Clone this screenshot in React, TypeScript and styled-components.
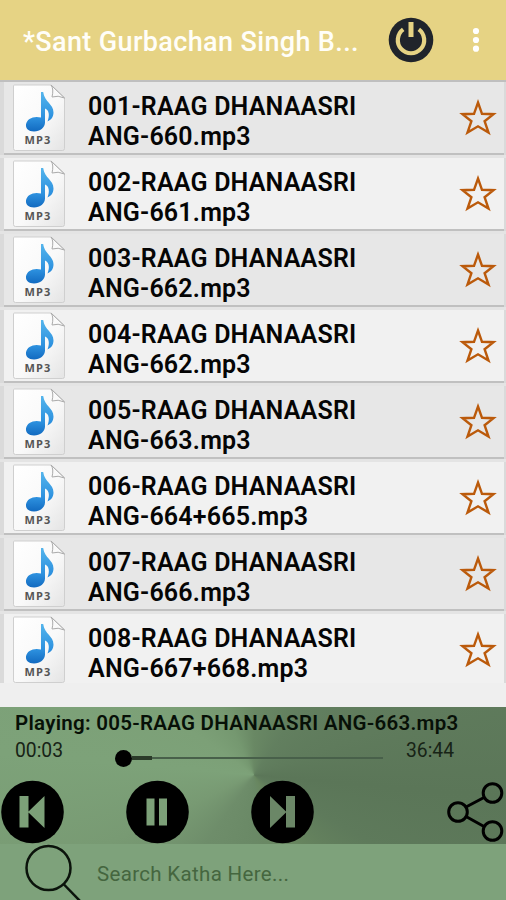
import React from "react";
import styled, { createGlobalStyle } from "styled-components";

const GlobalStyle = createGlobalStyle`
  * { box-sizing: border-box; }
  body { margin: 0; background: #efefef; font-family: Roboto, "Liberation Sans", sans-serif; }
`;

const Screen = styled.main`
  width: 506px;
  height: 900px;
  display: flex;
  flex-direction: column;
  overflow: hidden;
  background: #efefef;
`;

const Header = styled.header`
  flex: 0 0 80px;
  display: flex;
  align-items: center;
  padding-left: 23px;
  background: #e6d384;
`;

const Title = styled.h1`
  margin: 3px 0 0;
  width: 365px;
  color: #fffef8;
  font-size: 27px;
  font-weight: 500;
  line-height: 36px;
  letter-spacing: 0.36px;
  white-space: nowrap;
`;

const IconButton = styled.button<{ $width: number; $height: number }>`
  display: block;
  width: ${(p) => p.$width}px;
  height: ${(p) => p.$height}px;
  padding: 0;
  border: 0;
  background: none;
  flex-shrink: 0;

  svg { display: block; }
`;

const MenuButton = styled(IconButton)`
  margin-left: 30px;
`;

const List = styled.ul`
  flex: 0 0 603px;
  margin: 0;
  padding: 0;
  list-style: none;
  overflow: hidden;
  background: #dcdcdc;
  border-top: 2px solid #bfbfbf;
`;

const Row = styled.li`
  height: 76px;
  padding: 0 2px 0 4px;
  border-bottom: 3px solid #e4e4e4;
  background: #dadada;
`;

const RowCard = styled.div<{ $shaded: boolean }>`
  height: 73px;
  display: flex;
  align-items: flex-start;
  padding: 1px 7px 0 5px;
  border-bottom: 2px solid #c0c0c0;
  background: ${(p) => (p.$shaded ? "#e7e7e7" : "#f1f1f1")};
`;

const TrackName = styled.span`
  width: 314px;
  margin: 9px 0 0 21px;
  color: #050505;
  font-size: 25px;
  font-weight: 600;
  line-height: 30px;
  letter-spacing: 0.2px;
  white-space: pre-line;
`;

const StarButton = styled(IconButton)`
  margin: 15px 0 0 auto;
`;

const Player = styled.section`
  flex: 0 0 137px;
  margin-top: 24px;
  background:
    conic-gradient(from 0deg at 254px 68px,
      #698864 0deg, #627f5f 35deg, #5f7b5c 70deg, #5b7658 95deg, #5e7a5b 120deg, #68865f 150deg,
      #6a8966 180deg, #6e8d6a 215deg, #789a73 245deg, #7da279 275deg,
      #7ca077 305deg, #759870 335deg, #698864 360deg);
`;

const NowPlaying = styled.div`
  height: 30px;
  padding: 1px 0 0 15px;
  color: #071007;
  font-size: 20.5px;
  font-weight: 600;
  line-height: 30px;
  letter-spacing: 0.28px;
  white-space: nowrap;
`;

const Progress = styled.div`
  height: 43px;
  display: flex;
  align-items: flex-start;
  padding-left: 15px;
  color: #172316;
  font-size: 19.3px;
  line-height: 28px;
`;

const Elapsed = styled.time`
  width: 100px;
`;

const Seek = styled.div`
  width: 268px;
  height: 43px;
  display: flex;
  align-items: center;
  padding-bottom: 1px;
`;

const Thumb = styled.span`
  width: 17px;
  height: 17px;
  border-radius: 50%;
  background: #000;
`;

const Played = styled.span`
  width: 20px;
  height: 4px;
  background: #2b3b29;
`;

const Remaining = styled.span`
  width: 231px;
  height: 2px;
  background: #48604a;
`;

const Duration = styled.time`
  margin-left: 23px;
`;

const Controls = styled.div`
  height: 64px;
  display: flex;
  align-items: center;
  padding-left: 1px;
  gap: 62px;
`;

const ShareButton = styled(IconButton)`
  margin-left: 69px;
`;

const SearchBar = styled.label`
  flex: 0 0 56px;
  display: flex;
  align-items: flex-start;
  padding-left: 24px;
  background: #7ea27b;
`;

const SearchInput = styled.input`
  width: 390px;
  height: 56px;
  margin-left: 15px;
  padding: 3px 0 0;
  border: 0;
  outline: 0;
  background: transparent;
  font: 400 20.5px Roboto, sans-serif;
  letter-spacing: 0.33px;

  &::placeholder { color: #45663f; opacity: 1; }
`;

const FileArt = styled.svg`
  display: block;
  flex: 0 0 58px;
  margin-top: 1px;
`;

function Mp3Icon() {
  return (
    <FileArt width="58" height="69" viewBox="0 0 58 69">
      <defs>
        <linearGradient id="page" x2="1" y2="1">
          <stop stopColor="#fff" /><stop offset=".55" stopColor="#f9f9f9" /><stop offset="1" stopColor="#e4e4e4" />
        </linearGradient>
        <linearGradient id="note" x1="0" y1="0" x2="0" y2="1">
          <stop stopColor="#55b5ec" /><stop offset=".65" stopColor="#2d91df" /><stop offset="1" stopColor="#126ac0" />
        </linearGradient>
      </defs>
      <path d="M5.5 1H42L55.5 13.5V64.5Q55.5 66.5 53.5 66.5H6.5Q4.5 66.5 4.5 64.5V2Q4.5 1 5.5 1Z" fill="url(#page)" stroke="#cfcfcf" />
      <path d="M42 1Q45 5 43 13Q49 11 55.5 14Z" fill="#fafafa" stroke="#aaa" />
      <path d="M32 8H34.2C35.500 18 44.500 20 44.500 28.500C44.500 33 42 36 38.500 37.500C41 31 40 26 36 24.500V38.500C36 43.500 31 47.500 25 47.500C19.500 47.500 16.500 44.500 17 40.500C17.800 34.500 25 31.500 32 33.500Z" fill="url(#note)" />
      <text x="15.5" y="60" fontSize="11" fontWeight="700" fontFamily="Open Sans, sans-serif" fill="#555" letterSpacing="1.1">MP3</text>
    </FileArt>
  );
}

const StarIcon = () => (
  <svg width="38" height="40" viewBox="0 0 38 40" fill="none" stroke="#bb5a0b" strokeWidth="2.4">
    <path d="M19 4.500L23 15.800L34.500 16.200L25.600 23.200L29.500 34.500L19 28.300L8.500 34.500L12.400 23.200L3.500 16.200L15 15.800Z" />
  </svg>
);

const PowerIcon = () => (
  <svg width="46" height="46" viewBox="0 0 46 46">
    <circle cx="23" cy="23" r="22.3" fill="#20242b" />
    <path d="M15.2 12.4A13.2 13.2 0 1 0 30.8 12.4" fill="none" stroke="#e6d384" strokeWidth="4.2" />
    <path d="M23 5V20" stroke="#e6d384" strokeWidth="5" />
  </svg>
);

const MoreIcon = () => (
  <svg width="24" height="34" viewBox="0 0 24 34" fill="#fff">
    <circle cx="12" cy="8" r="3.1" /><circle cx="12" cy="17" r="3.1" /><circle cx="12" cy="25.7" r="3.1" />
  </svg>
);

function ControlIcon({ kind }: { kind: "previous" | "pause" | "next" }) {
  return (
    <svg width="63" height="64" viewBox="0 0 63 64">
      <circle cx="31.5" cy="32" r="31.3" fill="#000" />
      {kind === "previous" && <path d="M18.5 16H27.5V31.5L43.5 16V48L27.5 32.5V47.5H18.5Z" fill="#7ca078" />}
      {kind === "pause" && <path d="M20.5 18.5H28.5V45.5H20.5ZM33 18.5H41V45.5H33Z" fill="#7ca078" />}
      {kind === "next" && <path d="M19 16L35 31.5V16H44V47.5H35V32.5L19 48Z" fill="#6b8767" />}
    </svg>
  );
}

const ShareIcon = () => (
  <svg width="60" height="64" viewBox="0 0 60 64" fill="none" stroke="#000" strokeWidth="3">
    <circle cx="13" cy="32" r="9.3" /><circle cx="47.5" cy="13" r="9.3" /><circle cx="47.5" cy="51" r="9.3" />
    <path d="M21 27L39 17.5M21 36.5L39 46.5" />
  </svg>
);

const SearchIcon = () => (
  <svg width="58" height="56" viewBox="0 0 58 56" fill="none" stroke="#0b130b" strokeWidth="2.5">
    <circle cx="24.5" cy="24" r="22" /><path d="M39.5 40L56 57" />
  </svg>
);

const tracks = [
  ["001", "660"], ["002", "661"], ["003", "662"], ["004", "662"],
  ["005", "663"], ["006", "664+665"], ["007", "666"], ["008", "667+668"],
];

export default function App() {
  return (
    <>
      <GlobalStyle />
      <Screen>
        <Header>
          <Title>*Sant Gurbachan Singh B...</Title>
          <IconButton $width={46} $height={46} aria-label="Power"><PowerIcon /></IconButton>
          <MenuButton $width={24} $height={34} aria-label="More"><MoreIcon /></MenuButton>
        </Header>
        <List>
          {tracks.map(([number, page], i) => (
            <Row key={number}>
              <RowCard $shaded={i % 2 === 0}>
                <Mp3Icon />
                <TrackName>{`${number}-RAAG DHANAASRI\nANG-${page}.mp3`}</TrackName>
                <StarButton $width={38} $height={40} aria-label="Favourite"><StarIcon /></StarButton>
              </RowCard>
            </Row>
          ))}
        </List>
        <Player>
          <NowPlaying>Playing: 005-RAAG DHANAASRI ANG-663.mp3</NowPlaying>
          <Progress>
            <Elapsed>00:03</Elapsed>
            <Seek><Thumb /><Played /><Remaining /></Seek>
            <Duration>36:44</Duration>
          </Progress>
          <Controls>
            <IconButton $width={63} $height={64} aria-label="Previous"><ControlIcon kind="previous" /></IconButton>
            <IconButton $width={63} $height={64} aria-label="Pause"><ControlIcon kind="pause" /></IconButton>
            <IconButton $width={63} $height={64} aria-label="Next"><ControlIcon kind="next" /></IconButton>
            <ShareButton $width={60} $height={64} aria-label="Share"><ShareIcon /></ShareButton>
          </Controls>
        </Player>
        <SearchBar>
          <SearchIcon />
          <SearchInput placeholder="Search Katha Here..." />
        </SearchBar>
      </Screen>
    </>
  );
}
